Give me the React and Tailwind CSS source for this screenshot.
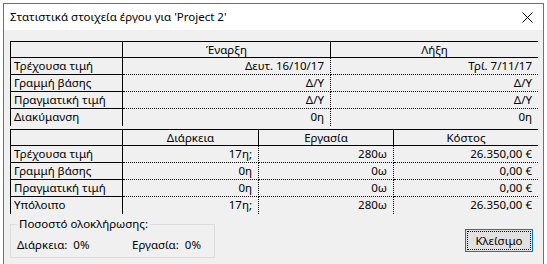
import React from "react";

const dates = [
  ["Τρέχουσα τιμή", "Δευτ. 16/10/17", "Τρί. 7/11/17"],
  ["Γραμμή βάσης", "Δ/Υ", "Δ/Υ"],
  ["Πραγματική τιμή", "Δ/Υ", "Δ/Υ"],
  ["Διακύμανση", "0η", "0η"],
];

const totals = [
  ["Τρέχουσα τιμή", "17η;", "280ω", "26.350,00 €"],
  ["Γραμμή βάσης", "0η", "0ω", "0,00 €"],
  ["Πραγματική τιμή", "0η", "0ω", "0,00 €"],
  ["Υπόλοιπο", "17η;", "280ω", "26.350,00 €"],
];

function StatTable({ cols, heads, rows }) {
  return (
    <div className={`grid ${cols} border-t border-l border-black`}>
      <div className="h-[16px] border-b border-r border-black" />
      {heads.map((h, i) => (
        <div
          key={h}
          className={`h-[16px] leading-[15px] text-center border-b border-black ${i < heads.length - 1 ? "border-r" : ""}`}
        >
          {h}
        </div>
      ))}
      {rows.map((row, r) => {
        const last = r === rows.length - 1;
        return row.map((v, c) => {
          if (c === 0) {
            return (
              <div
                key={r + "-" + c}
                className={`h-[17px] leading-[16px] pl-[3px] border-r border-black ${last ? "" : "border-b"}`}
              >
                {v}
              </div>
            );
          }
          return (
            <div
              key={r + "-" + c}
              className={`h-[17px] leading-[16px] text-right pr-[6px] border-dotted border-black ${last ? "" : "border-b"} ${c < row.length - 1 ? "border-r" : ""}`}
            >
              {v}
            </div>
          );
        });
      })}
    </div>
  );
}

export default function App() {
  return (
    <div className="w-[547px] h-[264px] bg-white overflow-hidden text-[11.5px] text-black" style={{ fontFamily: '"Noto Sans", "DejaVu Sans", sans-serif' }}>
      <div className="ml-[3px] mt-[3px] w-[541px] h-[262px] border border-[#2d7fd3] bg-[#f0f0f0] flex flex-col">
        {/* title bar */}
        <div className="h-[26px] bg-white flex items-center justify-between pl-[6px] pr-[8px]">
          <span>Στατιστικά στοιχεία έργου για 'Project 2'</span>
          <svg width="11" height="11" viewBox="0 0 11 11" className="mr-[2px]">
            <path d="M0.5 0.5 L10.5 10.5 M10.5 0.5 L0.5 10.5" stroke="#000" strokeWidth="1" />
          </svg>
        </div>

        {/* tables */}
        <div className="pl-[6px] pr-[5px] pt-[11px] flex flex-col gap-[3px]">
          <StatTable cols="grid-cols-[112px_208px_207px]" heads={["Έναρξη", "Λήξη"]} rows={dates} />
          <StatTable cols="grid-cols-[112px_136px_135px_144px]" heads={["Διάρκεια", "Εργασία", "Κόστος"]} rows={totals} />
        </div>

        {/* footer */}
        <div className="flex items-start justify-between pl-[6px] pr-[10px] mt-[3px]">
          <fieldset className="w-[205px] h-[41px] border border-[#dcdcdc] px-[6px]">
            <legend className="px-[2px] leading-[14px]">Ποσοστό ολοκλήρωσης:</legend>
            <div className="flex mt-[5px]">
              <span className="w-[115px]">Διάρκεια:&nbsp;&nbsp;0%</span>
              <span>Εργασία:&nbsp;&nbsp;0%</span>
            </div>
          </fieldset>
          <button className="w-[68px] h-[23px] border border-[#0078d7] bg-[#e1e1e1] p-[1px] mt-[12px]">
            <span className="flex items-center justify-center w-full h-full outline outline-1 outline-dotted outline-black -outline-offset-1 leading-[14px]">
              Κλείσιμο
            </span>
          </button>
        </div>
      </div>
    </div>
  );
}
